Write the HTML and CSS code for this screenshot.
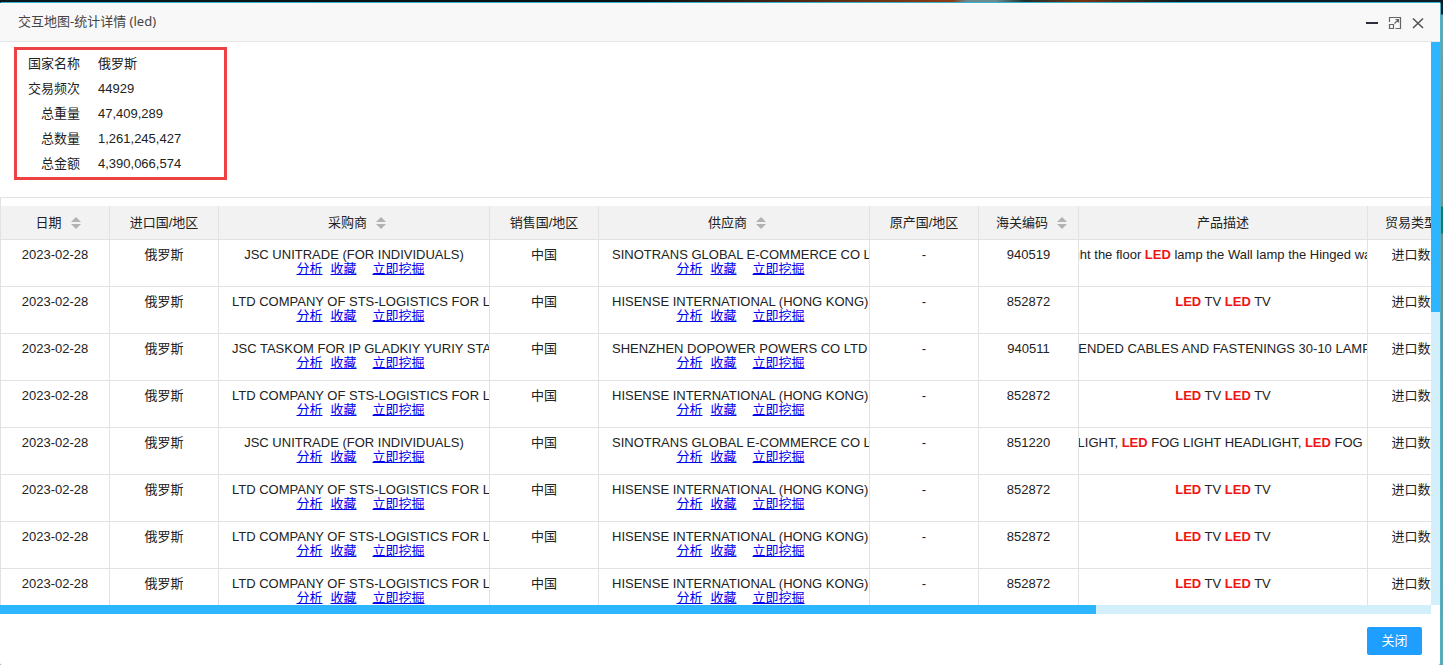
FILE: index.html
```
<!DOCTYPE html>
<html lang="zh-CN">
<head>
<meta charset="utf-8">
<title>交互地图-统计详情 (led)</title>
<link rel="stylesheet" href="styles.css">
</head>
<body>
<section class="dialog" role="dialog" aria-labelledby="dialog-title">
  <header class="dialog-head">
    <h1 class="dialog-title" id="dialog-title">交互地图-统计详情 (led)</h1>
    <div class="window-tools">
      <button type="button" class="tool" aria-label="最小化"><svg width="14" height="14" viewBox="0 0 14 14"><path d="M1 8h12" stroke="#2d2c3b" stroke-width="2"/></svg></button>
      <button type="button" class="tool" aria-label="最大化"><svg width="14" height="14" viewBox="0 0 14 14" fill="none" stroke="#666" stroke-width="1.200"><path d="M1.500 7V2.500h11v11H7.500"/><path d="M1.500 9.500h4v4h-4zM6.500 8.500l4-4M7.500 4.500h3v3"/></svg></button>
      <button type="button" class="tool" aria-label="关闭窗口"><svg width="14" height="14" viewBox="0 0 14 14"><path d="M2 3.500l10 9.500M12 3.500L2 13" stroke="#555" stroke-width="1.600"/></svg></button>
    </div>
  </header>
  <div class="scroller">
    <main class="viewport">
      <dl class="summary">
        <dt>国家名称</dt><dd>俄罗斯</dd>
        <dt>交易频次</dt><dd>44929</dd>
        <dt>总重量</dt><dd>47,409,289</dd>
        <dt>总数量</dt><dd>1,261,245,427</dd>
        <dt>总金额</dt><dd>4,390,066,574</dd>
      </dl>
      <div class="table-view">
        <table class="records">
          <colgroup><col class="c-first"><col class="c-area"><col class="c-company"><col class="c-area"><col class="c-company"><col class="c-area"><col class="c-code"><col class="c-desc"><col class="c-code"></colgroup>
          <thead>
            <tr>
              <th scope="col">日期<button type="button" class="sort" aria-label="按日期排序"></button></th>
              <th scope="col">进口国/地区</th>
              <th scope="col">采购商<button type="button" class="sort" aria-label="按采购商排序"></button></th>
              <th scope="col">销售国/地区</th>
              <th scope="col">供应商<button type="button" class="sort" aria-label="按供应商排序"></button></th>
              <th scope="col">原产国/地区</th>
              <th scope="col">海关编码<button type="button" class="sort" aria-label="按海关编码排序"></button></th>
              <th scope="col">产品描述</th>
              <th scope="col">贸易类型<button type="button" class="sort" aria-label="按贸易类型排序"></button></th>
            </tr>
          </thead>
          <tbody>
            <tr>
              <td>2023-02-28</td><td>俄罗斯</td>
              <td><div class="company">JSC UNITRADE (FOR INDIVIDUALS)</div><div class="links"><a href="#">分析</a><a href="#">收藏</a><a href="#" class="dig">立即挖掘</a></div></td>
              <td>中国</td>
              <td><div class="company">SINOTRANS GLOBAL E-COMMERCE CO LTD</div><div class="links"><a href="#">分析</a><a href="#">收藏</a><a href="#" class="dig">立即挖掘</a></div></td>
              <td>-</td><td>940519</td>
              <td><div class="desc"><span>Light the floor <b>LED</b> lamp the Wall lamp the Hinged wall l</span></div></td>
              <td>进口数据</td>
            </tr>
            <tr>
              <td>2023-02-28</td><td>俄罗斯</td>
              <td><div class="company">LTD COMPANY OF STS-LOGISTICS FOR LTD</div><div class="links"><a href="#">分析</a><a href="#">收藏</a><a href="#" class="dig">立即挖掘</a></div></td>
              <td>中国</td>
              <td><div class="company">HISENSE INTERNATIONAL (HONG KONG)</div><div class="links"><a href="#">分析</a><a href="#">收藏</a><a href="#" class="dig">立即挖掘</a></div></td>
              <td>-</td><td>852872</td>
              <td><div class="desc"><span><b>LED</b> TV <b>LED</b> TV</span></div></td>
              <td>进口数据</td>
            </tr>
            <tr>
              <td>2023-02-28</td><td>俄罗斯</td>
              <td><div class="company">JSC TASKOM FOR IP GLADKIY YURIY STANISLAVOVICH</div><div class="links"><a href="#">分析</a><a href="#">收藏</a><a href="#" class="dig">立即挖掘</a></div></td>
              <td>中国</td>
              <td><div class="company">SHENZHEN DOPOWER POWERS CO LTD</div><div class="links"><a href="#">分析</a><a href="#">收藏</a><a href="#" class="dig">立即挖掘</a></div></td>
              <td>-</td><td>940511</td>
              <td><div class="desc"><span>SUSPENDED CABLES AND FASTENINGS 30-10 LAMPS, TV</span></div></td>
              <td>进口数据</td>
            </tr>
            <tr>
              <td>2023-02-28</td><td>俄罗斯</td>
              <td><div class="company">LTD COMPANY OF STS-LOGISTICS FOR LTD</div><div class="links"><a href="#">分析</a><a href="#">收藏</a><a href="#" class="dig">立即挖掘</a></div></td>
              <td>中国</td>
              <td><div class="company">HISENSE INTERNATIONAL (HONG KONG)</div><div class="links"><a href="#">分析</a><a href="#">收藏</a><a href="#" class="dig">立即挖掘</a></div></td>
              <td>-</td><td>852872</td>
              <td><div class="desc"><span><b>LED</b> TV <b>LED</b> TV</span></div></td>
              <td>进口数据</td>
            </tr>
            <tr>
              <td>2023-02-28</td><td>俄罗斯</td>
              <td><div class="company">JSC UNITRADE (FOR INDIVIDUALS)</div><div class="links"><a href="#">分析</a><a href="#">收藏</a><a href="#" class="dig">立即挖掘</a></div></td>
              <td>中国</td>
              <td><div class="company">SINOTRANS GLOBAL E-COMMERCE CO LTD</div><div class="links"><a href="#">分析</a><a href="#">收藏</a><a href="#" class="dig">立即挖掘</a></div></td>
              <td>-</td><td>851220</td>
              <td><div class="desc"><span>HEADLIGHT, <b>LED</b> FOG LIGHT HEADLIGHT, <b>LED</b> FOG LIGHT</span></div></td>
              <td>进口数据</td>
            </tr>
            <tr>
              <td>2023-02-28</td><td>俄罗斯</td>
              <td><div class="company">LTD COMPANY OF STS-LOGISTICS FOR LTD</div><div class="links"><a href="#">分析</a><a href="#">收藏</a><a href="#" class="dig">立即挖掘</a></div></td>
              <td>中国</td>
              <td><div class="company">HISENSE INTERNATIONAL (HONG KONG)</div><div class="links"><a href="#">分析</a><a href="#">收藏</a><a href="#" class="dig">立即挖掘</a></div></td>
              <td>-</td><td>852872</td>
              <td><div class="desc"><span><b>LED</b> TV <b>LED</b> TV</span></div></td>
              <td>进口数据</td>
            </tr>
            <tr>
              <td>2023-02-28</td><td>俄罗斯</td>
              <td><div class="company">LTD COMPANY OF STS-LOGISTICS FOR LTD</div><div class="links"><a href="#">分析</a><a href="#">收藏</a><a href="#" class="dig">立即挖掘</a></div></td>
              <td>中国</td>
              <td><div class="company">HISENSE INTERNATIONAL (HONG KONG)</div><div class="links"><a href="#">分析</a><a href="#">收藏</a><a href="#" class="dig">立即挖掘</a></div></td>
              <td>-</td><td>852872</td>
              <td><div class="desc"><span><b>LED</b> TV <b>LED</b> TV</span></div></td>
              <td>进口数据</td>
            </tr>
            <tr>
              <td>2023-02-28</td><td>俄罗斯</td>
              <td><div class="company">LTD COMPANY OF STS-LOGISTICS FOR LTD</div><div class="links"><a href="#">分析</a><a href="#">收藏</a><a href="#" class="dig">立即挖掘</a></div></td>
              <td>中国</td>
              <td><div class="company">HISENSE INTERNATIONAL (HONG KONG)</div><div class="links"><a href="#">分析</a><a href="#">收藏</a><a href="#" class="dig">立即挖掘</a></div></td>
              <td>-</td><td>852872</td>
              <td><div class="desc"><span><b>LED</b> TV <b>LED</b> TV</span></div></td>
              <td>进口数据</td>
            </tr>
          </tbody>
        </table>
      </div>
    </main>
    <div class="track track-y"><div class="thumb thumb-y"></div></div>
    <div class="track track-x"><div class="thumb thumb-x"></div></div>
  </div>
  <footer class="dialog-foot">
    <button type="button" class="close-btn">关闭</button>
  </footer>
</section>
</body>
</html>
```
FILE: styles.css
```
* { box-sizing: border-box; }

body {
  margin: 0;
  height: 100vh;
  padding: 2px 3px 0 0;
  overflow: hidden;
  background:
    linear-gradient(90deg, #0b1820 0, #0b1015 44%, #8a3a14 65%, #8a3a14 66%, #6b8a92 67%, #6b8a92 69%, #20302f 71%, #7a3210 75%, #0c1c26 82%) top / 100% 2px no-repeat,
    linear-gradient(#06202e 0 14px, #6fa3b4 15px, #7c9399 100px, #7c9399 206px, #067d80 207px 233px, #6f8d98 234px, #6aa3ad 100%);
  color: #222;
  font: 13px/14px "Liberation Sans", Arial, "Noto Sans CJK SC", sans-serif;
}

button { margin: 0; padding: 0; border: 0; background: none; font: inherit; cursor: pointer; }

.dialog {
  display: flex;
  flex-direction: column;
  height: 100%;
  border-top: 1px solid #35b3cb;
  border-radius: 2px;
  background: #fff;
  box-shadow: 1px 0 #4fb2c4;
}

.dialog-head {
  display: flex;
  align-items: center;
  justify-content: space-between;
  height: 39px;
  padding: 0 15px 2px 18px;
  border-bottom: 1px solid #e6e6e6;
  background: #f8f8f8;
}

.dialog-title {
  margin: 0;
  color: #444;
  font: 13px/20px "Noto Sans", "Noto Sans CJK SC", sans-serif;
}

.window-tools { display: flex; gap: 9px; padding-top: 2px; }
.tool { display: flex; }

.scroller {
  flex: 1;
  min-height: 0;
  display: grid;
  grid-template: minmax(0, 1fr) 9px / minmax(0, 1fr) 9px;
}

.viewport { overflow: hidden; }

.summary {
  display: grid;
  grid-template-columns: 63px 1fr;
  column-gap: 18px;
  width: 213px;
  margin: 5px 0 17px 14px;
  padding: 1px 0;
  border: 3px solid #ee4242;
  line-height: 25px;
}
.summary dt { text-align: right; }
.summary dd { margin: 0; }

.table-view {
  padding-top: 8px;
  border-top: 1px solid #e2e2e2;
  border-left: 1px solid #e2e2e2;
}

.records {
  width: 1467px;
  table-layout: fixed;
  border-collapse: separate;
  border-spacing: 0;
}
.c-first, .c-area { width: 109px; }
.c-company { width: 271px; }
.c-code { width: 100px; }
.c-desc { width: 289px; }

.records th {
  height: 34px;
  padding: 0;
  border-right: 1px solid #e2e2e2;
  border-bottom: 1px solid #e2e2e2;
  background: #f2f2f2;
  font-weight: 400;
  white-space: nowrap;
}

.records td {
  height: 47px;
  padding: 8px 0 0;
  overflow: hidden;
  border-right: 1px solid #e2e2e2;
  border-bottom: 1px solid #e2e2e2;
  text-align: center;
  vertical-align: top;
  white-space: nowrap;
}

.sort {
  display: inline-flex;
  flex-direction: column;
  gap: 2px;
  margin: 0 -6px 0 9px;
  vertical-align: middle;
}
.sort::before, .sort::after {
  content: "";
  border: 5px solid transparent;
  border-top-width: 0;
  border-bottom: 5px solid #b2b2b2;
}
.sort::after {
  border-top: 5px solid #b2b2b2;
  border-bottom-width: 0;
}

.company { height: 14px; padding: 0 13px; }
.links {
  display: flex;
  justify-content: center;
  gap: 8px;
  height: 14px;
  padding-left: 13px;
}
.links a { color: #00e; }
.links .dig { margin-left: 8px; }

.desc { display: flex; justify-content: center; }
.desc b { color: #f01414; }

.track { background: #d4effc; }
.thumb { background: #2db5ff; }
.thumb-y { height: 48%; }
.thumb-x { width: 76.6%; height: 100%; }

.dialog-foot {
  display: flex;
  justify-content: flex-end;
  height: 51px;
  padding: 13px 18px 10px;
}
.close-btn {
  width: 55px;
  height: 28px;
  border-radius: 2px;
  background: #1e9fff;
  color: #fff;
}
```
